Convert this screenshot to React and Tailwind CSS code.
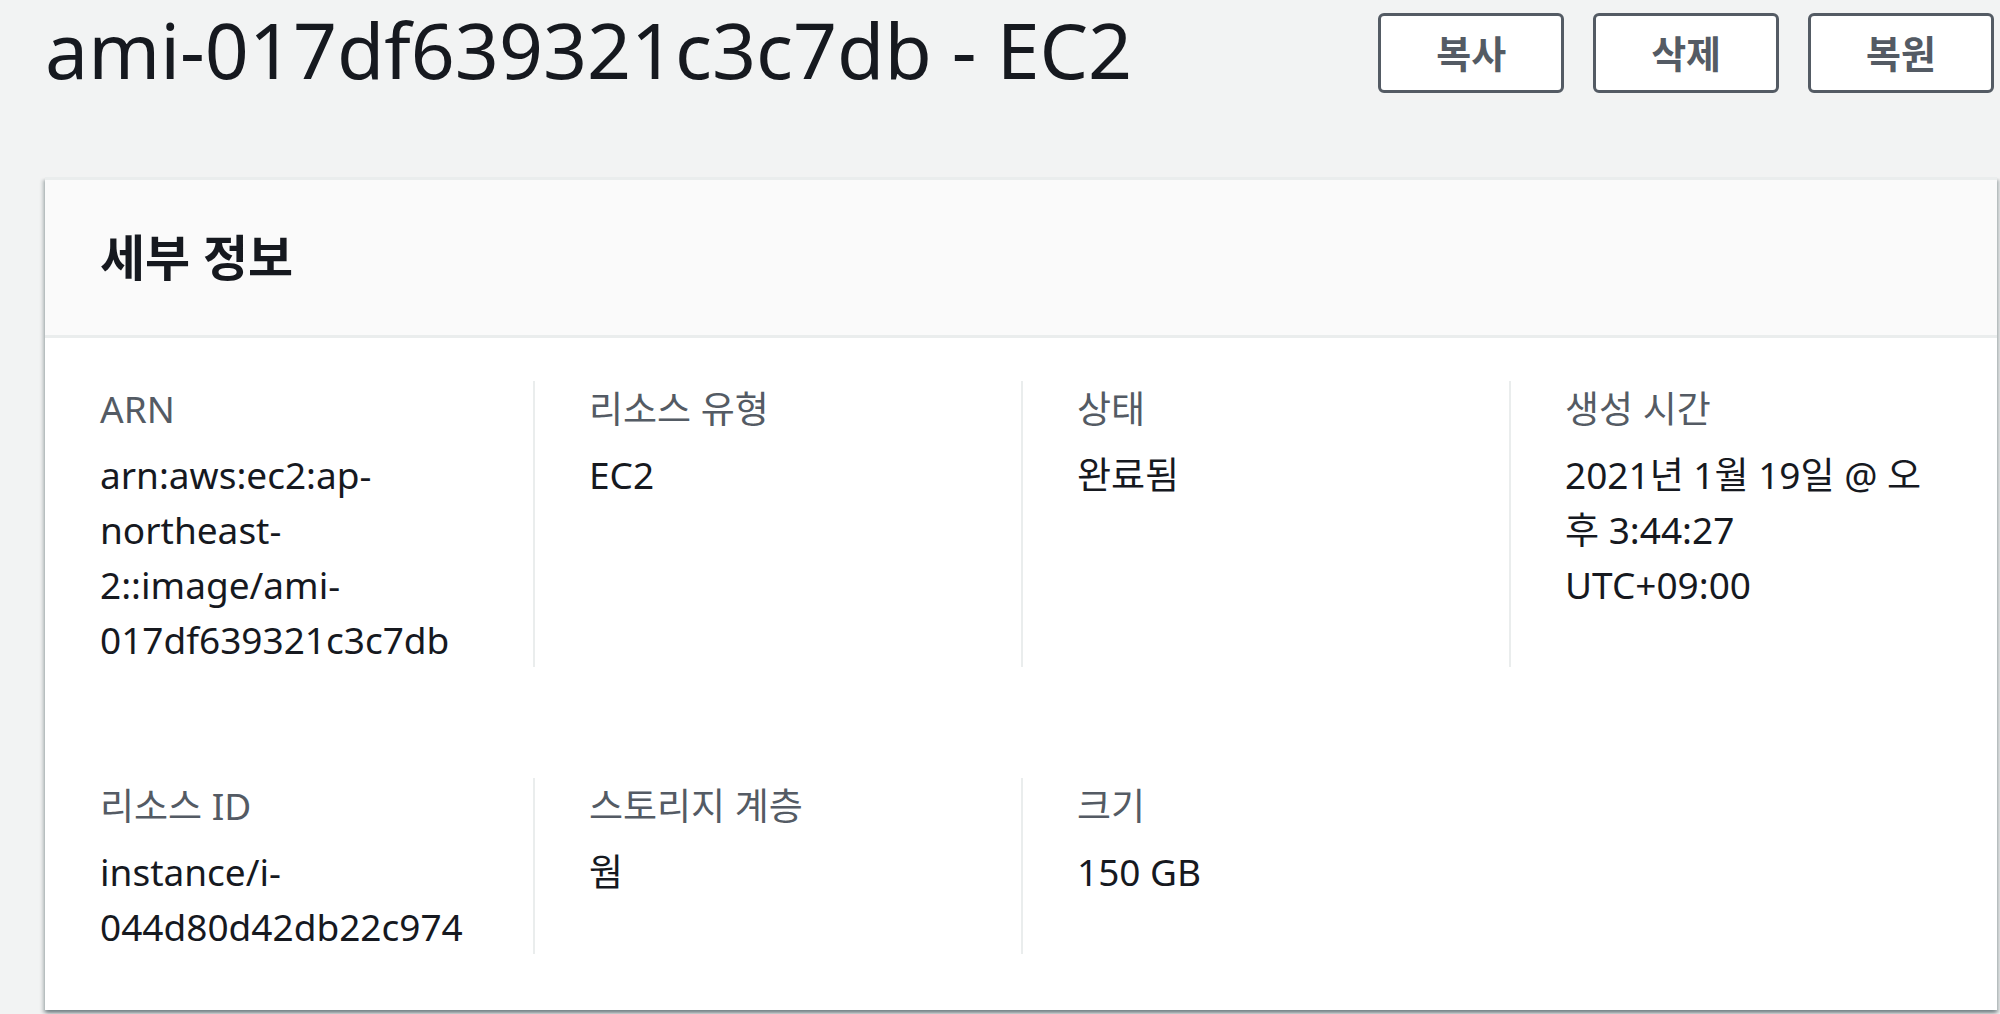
const rows = [
    [
        { label: 'ARN', value: ['arn:aws:ec2:ap-northeast-2::image/ami-017df639321c3c7db'] },
        { label: '리소스 유형', value: ['EC2'] },
        { label: '상태', value: ['완료됨'] },
        { label: '생성 시간', value: ['2021년 1월 19일 @ 오후 3:44:27', 'UTC+09:00'] },
    ],
    [
        { label: '리소스 ID', value: ['instance/i-044d80d42db22c974'] },
        { label: '스토리지 계층', value: ['웜'] },
        { label: '크기', value: ['150 GB'] },
    ],
];

function ActionButton({ children }) {
    return (
        <button className="h-[80px] px-[55px] flex items-center bg-white border-[3px] border-[#545b64] rounded-[6px] text-[38px] leading-none font-bold text-[#545b64]">
            {children}
        </button>
    );
}

export default function App() {
    return (
        <div className="min-h-screen bg-[#f2f3f3] pl-[45px] pr-[3px] font-['Noto_Sans','Noto_Sans_CJK_KR',sans-serif] text-[#16191f]">
            <div className="flex items-start justify-between">
                <h1 className="text-[77px] leading-[99px] font-normal">ami-017df639321c3c7db - EC2</h1>
                <div className="flex gap-[29px] pt-[13px] pr-[3px]">
                    <ActionButton>복사</ActionButton>
                    <ActionButton>삭제</ActionButton>
                    <ActionButton>복원</ActionButton>
                </div>
            </div>

            <div className="mt-[78px] bg-white border-t-[3px] border-[#eaeded] shadow-[0_3px_3px_0_rgba(0,28,36,0.3),3px_3px_3px_0_rgba(0,28,36,0.15),-3px_3px_3px_0_rgba(0,28,36,0.15)]">
                <div className="h-[158px] flex items-center px-[55px] bg-[#fafafa] border-b-[3px] border-[#eaeded]">
                    <h2 className="text-[49px] font-bold leading-none">세부 정보</h2>
                </div>

                <div className="pt-[43px] pb-[56px] flex flex-col gap-[111px]">
                    {rows.map((row, i) => (
                        <div key={i} className="grid grid-cols-4">
                            {row.map((item, j) => (
                                <div
                                    key={item.label}
                                    className={j === 0 ? 'pl-[55px] pr-[55px]' : 'border-l-2 border-[#eaeded] pl-[54px] pr-[55px]'}
                                >
                                    <div className="text-[37px] leading-[55px] text-[#545b64] mb-[11px]">{item.label}</div>
                                    <div className="text-[37px] leading-[55px] break-words">
                                        {item.value.map((line, k) => (
                                            <div key={k}>{line}</div>
                                        ))}
                                    </div>
                                </div>
                            ))}
                        </div>
                    ))}
                </div>
            </div>
        </div>
    );
}
